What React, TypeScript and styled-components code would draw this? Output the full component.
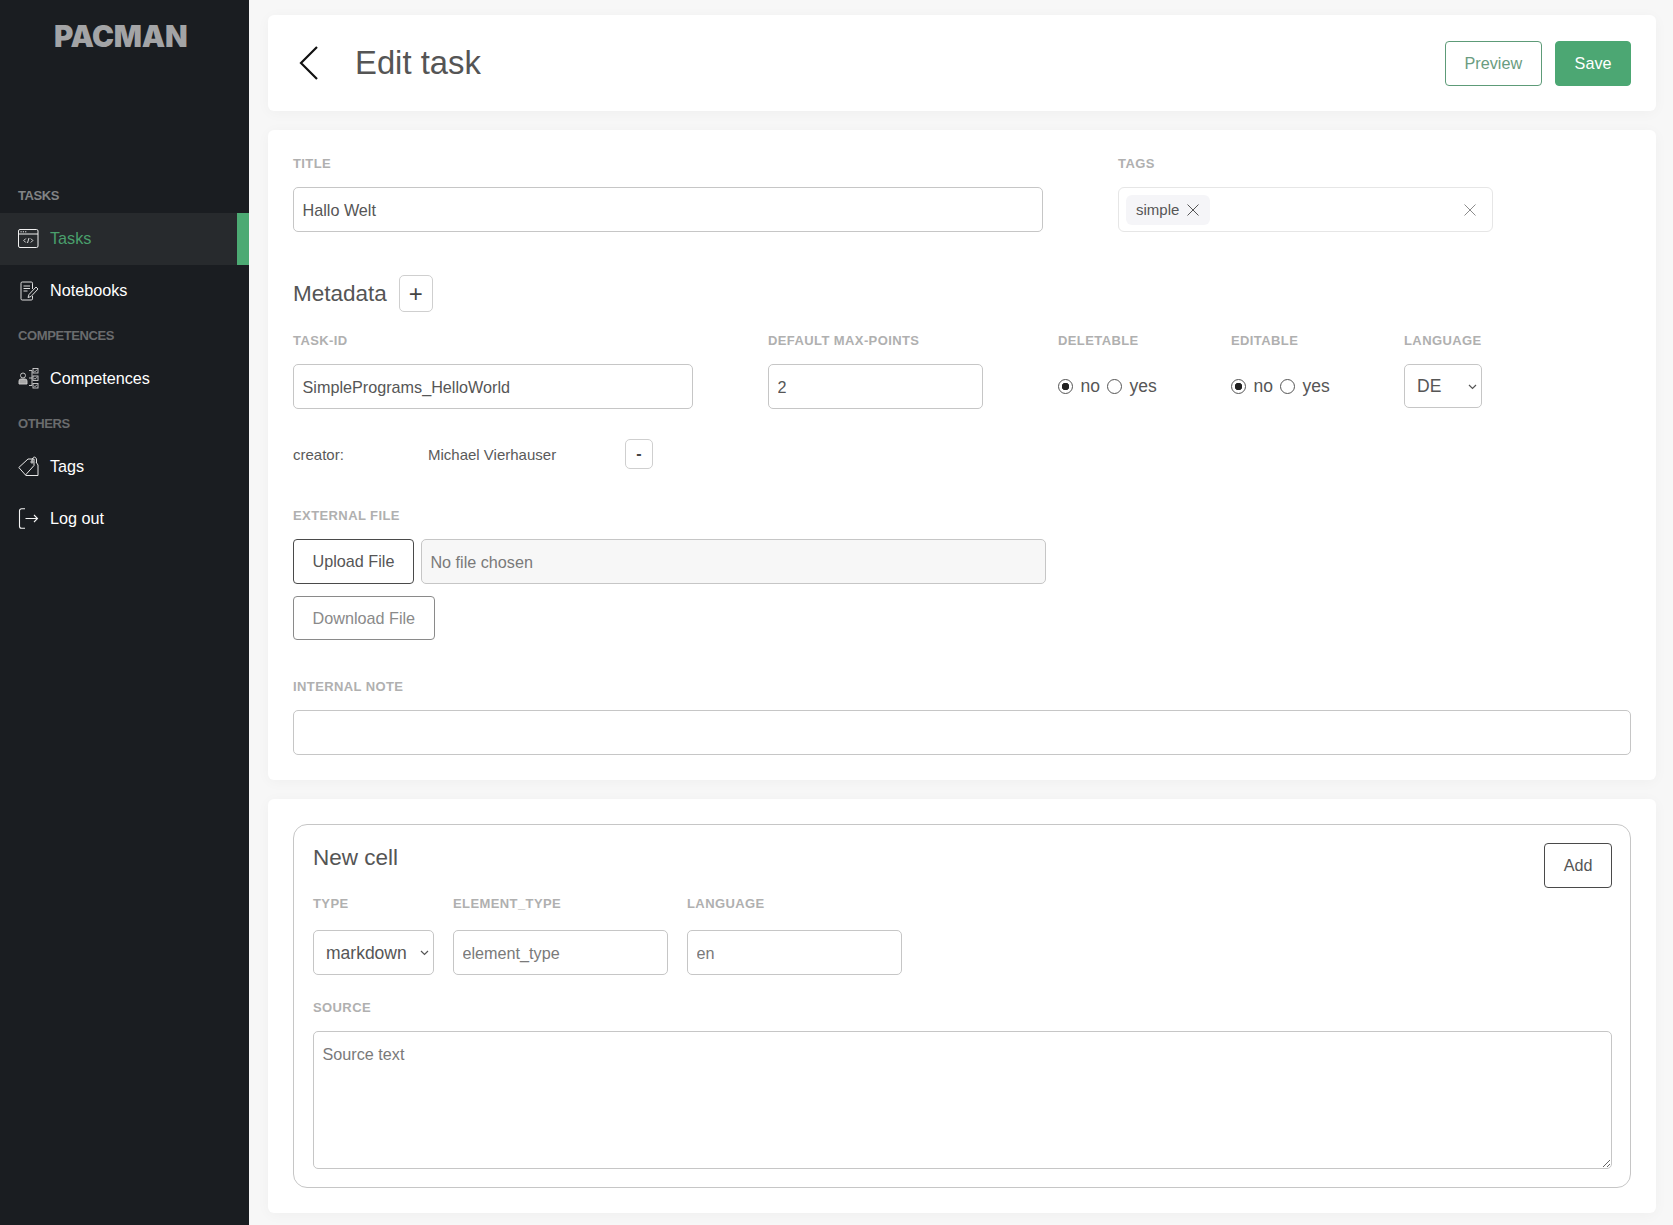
import React from "react";
import styled, { createGlobalStyle } from "styled-components";

const GlobalStyle = createGlobalStyle`
  * {
    box-sizing: border-box;
  }
  html,
  body {
    margin: 0;
    padding: 0;
    background: #f7f7f7;
  }
  body,
  input,
  select,
  textarea,
  button {
    font-family: "Liberation Sans", Arial, sans-serif;
  }
`;

const Page = styled.div`
  display: flex;
  min-height: 1225px;
  background: #f7f7f7;
`;

const Sidebar = styled.aside`
  flex: 0 0 249px;
  background: #1a1d21;
`;

const Logo = styled.div`
  height: 177px;
  padding-top: 18px;
  padding-left: 54px;
  font-family: Inter, "Liberation Sans", sans-serif;
  font-size: 29.5px;
  line-height: 36px;
  font-weight: 900;
  letter-spacing: -0.3px;
  color: #a3a4a6;
`;

const NavHeading = styled.div<{ $bright?: boolean }>`
  height: 36px;
  padding-left: 18px;
  padding-top: 11px;
  font-size: 13px;
  line-height: 16px;
  font-weight: 700;
  color: ${(p) => (p.$bright ? "#818385" : "#6a6c6e")};
  letter-spacing: -0.4px;
`;

const NavItem = styled.a<{ $active?: boolean }>`
  display: flex;
  align-items: center;
  gap: 11px;
  height: 52px;
  padding-left: 18px;
  padding-bottom: 2px;
  font-size: 16.2px;
  color: ${(p) => (p.$active ? "#4a9f6c" : "#ffffff")};
  background: ${(p) => (p.$active ? "#272a2d" : "transparent")};
  border-right: 12px solid ${(p) => (p.$active ? "#4caa73" : "transparent")};
`;

const Main = styled.main`
  flex: 1;
  padding: 15px 17px 10px 19px;
  display: flex;
  flex-direction: column;
  gap: 19px;
`;

const Card = styled.section`
  background: #ffffff;
  border-radius: 6px;
  padding: 25px;
  box-shadow: 0 2px 14px rgba(0, 0, 0, 0.035);
`;

const HeaderCard = styled(Card)`
  display: flex;
  align-items: center;
  height: 96px;
  padding: 0 25px 0 29px;
`;

const BackLink = styled.a`
  display: flex;
  width: 27px;
  margin-right: 31px;
  color: #111111;
`;

const PageTitle = styled.h1`
  flex: 1;
  margin: 0;
  font-size: 32.8px;
  font-weight: 400;
  color: #555555;
`;

const HeaderActions = styled.div`
  display: flex;
  gap: 13px;
`;

const Button = styled.button<{ $variant?: "green" | "solid" | "outline" | "muted" }>`
  height: ${(p) => (p.$variant === "muted" ? "44px" : "45px")};
  padding: ${(p) => (p.$variant === "muted" ? "1px" : "0")} ${(p) => (p.$variant === "green" ? "19px" : "18.5px")} 0;
  border-radius: 4px;
  font-size: 16.2px;
  background: ${(p) => (p.$variant === "solid" ? "#4ca773" : "#ffffff")};
  color: ${(p) =>
    p.$variant === "solid"
      ? "#ffffff"
      : p.$variant === "green"
        ? "#6a9c80"
        : p.$variant === "muted"
          ? "#8a8a8a"
          : "#565656"};
  border: 1px solid
    ${(p) =>
      p.$variant === "solid"
        ? "#4ca773"
        : p.$variant === "green"
          ? "#5d9b78"
          : p.$variant === "muted"
            ? "#8a8a8a"
            : "#4a4a4a"};
`;

const Row = styled.div<{ $gap?: number; $mt?: number }>`
  display: flex;
  align-items: flex-start;
  gap: ${(p) => p.$gap ?? 0}px;
  margin-top: ${(p) => p.$mt ?? 0}px;
`;

const Field = styled.div<{ $width: number }>`
  flex: 0 0 ${(p) => p.$width}px;
`;

const Label = styled.div<{ $tall?: boolean }>`
  height: ${(p) => (p.$tall ? "35px" : "32px")};
  padding-top: 1px;
  font-size: 13px;
  line-height: 15px;
  font-weight: 700;
  letter-spacing: 0.4px;
  color: #b0b0b0;
`;

const TextInput = styled.input<{ $width?: number }>`
  display: block;
  width: ${(p) => (p.$width ? `${p.$width}px` : "100%")};
  height: 45px;
  padding: 1px 8.5px 0;
  border: 1px solid #c6c6c6;
  border-radius: 5px;
  background: #ffffff;
  font-size: 16.2px;
  color: #565656;
  outline: none;
  &::placeholder {
    color: #7a7a7a;
  }
`;

const TagBox = styled.div`
  display: flex;
  align-items: center;
  height: 45px;
  padding: 0 15px 0 7px;
  border: 1px solid #e6e6e6;
  border-radius: 6px;
`;

const Tag = styled.span`
  display: flex;
  align-items: center;
  gap: 7px;
  height: 30px;
  padding: 0 10px;
  border-radius: 6px;
  background: #f5f5f8;
  font-size: 15px;
  color: #565656;
`;

const TagClear = styled.span`
  display: flex;
  margin-left: auto;
  color: #8c8c8c;
`;

const TagRemove = styled.span`
  display: flex;
  color: #555555;
`;

const SectionTitle = styled.h2`
  margin: 0;
  font-size: 22.5px;
  font-weight: 400;
  color: #555555;
`;

const MetadataHead = styled.div`
  display: flex;
  align-items: center;
  gap: 12px;
  margin-top: 43px;
  height: 37px;
`;

const SquareButton = styled.button<{ $small?: boolean }>`
  width: ${(p) => (p.$small ? "28px" : "34px")};
  height: ${(p) => (p.$small ? "30px" : "37px")};
  padding: 0;
  border: 1px solid #cfcfcf;
  border-radius: 5px;
  background: #ffffff;
  font-size: ${(p) => (p.$small ? "16px" : "24px")};
  font-weight: ${(p) => (p.$small ? 700 : 400)};
  color: #444444;
`;

const RadioRow = styled.div`
  display: flex;
  align-items: center;
  height: 45px;
  font-size: 17.5px;
  color: #565656;
`;

const Radio = styled.input.attrs({ type: "radio" })`
  appearance: none;
  width: 15px;
  height: 15px;
  margin: 0 7.5px 0 0;
  border: 1.2px solid #555555;
  border-radius: 50%;
  background: #ffffff;
  &:checked {
    background: radial-gradient(circle, #222222 0 3.5px, #ffffff 4px);
  }
`;

const RadioLabel = styled.label`
  margin-right: 7px;
`;

const SelectWrap = styled.div<{ $width: number }>`
  position: relative;
  width: ${(p) => p.$width}px;
`;

const Chevron = styled.svg`
  position: absolute;
  right: 5px;
  top: 20px;
  pointer-events: none;
`;

const SelectBox = styled.select<{ $height: number }>`
  display: block;
  width: 100%;
  height: ${(p) => p.$height}px;
  padding: 0 12px;
  appearance: none;
  border: 1px solid #c6c6c6;
  border-radius: 5px;
  background: #ffffff;
  font-size: 17.5px;
  color: #565656;
`;

const CreatorRow = styled.div`
  display: flex;
  align-items: center;
  height: 30px;
  margin-top: 30px;
  font-size: 15px;
  color: #5a5a5a;
`;

const CreatorKey = styled.span`
  width: 135px;
`;

const CreatorName = styled.span`
  width: 197px;
`;

const ExternalFile = styled.div`
  margin-top: 38px;
`;

const FileRow = styled.div`
  display: flex;
  gap: 7px;
  width: 753px;
`;

const FileName = styled(TextInput)`
  flex: 1;
  background: #f7f7f7;
`;

const DownloadRow = styled.div`
  margin-top: 12px;
`;

const NoteField = styled.div`
  margin-top: 38px;
`;

const CellBox = styled.div`
  height: 364px;
  padding: 18px 18px 19px 19px;
  border: 1px solid #c6c6c6;
  border-radius: 14px;
`;

const CellHead = styled.div`
  display: flex;
  justify-content: space-between;
  align-items: flex-start;
  height: 50px;
`;

const CellTitle = styled(SectionTitle)`
  margin-top: 2px;
`;

const TextArea = styled.textarea`
  display: block;
  width: 100%;
  height: 138px;
  padding: 13px 8.5px;
  border: 1px solid #c6c6c6;
  border-radius: 5px;
  font-size: 16.2px;
  color: #565656;
  outline: none;
  &::placeholder {
    color: #7a7a7a;
  }
`;

const SourceField = styled.div`
  margin-top: 24px;
`;

const XIcon = () => (
  <svg width="14" height="14" viewBox="0 0 14 14" fill="none" stroke="currentColor" strokeWidth="1">
    <path d="M1.5 1.5l11 11M12.5 1.5l-11 11" />
  </svg>
);

const TasksIcon = () => (
  <svg width="21" height="21" viewBox="0 0 21 21" fill="none" stroke="#f0f0f0" strokeWidth="1">
    <rect x="0.5" y="1.500" width="19.500" height="18" rx="1.500" />
    <path d="M0.500 6h19.500" />
    <path d="M2.500 3.800h1.200M4.800 3.800h1.200M7.100 3.800h1.200" />
    <path d="M7.800 10.500l-2 2 2 2M12.800 10.500l2 2-2 2M11 10l-1.500 5" strokeWidth="0.900" />
  </svg>
);

const NotebookIcon = () => (
  <svg width="21" height="21" viewBox="0 0 21 21" fill="none" stroke="#dddddd" strokeWidth="1">
    <path d="M14.500 9V3.200a1.200 1.200 0 0 0-1.200-1.200H4.200A1.200 1.200 0 0 0 3 3.200v15.600A1.200 1.200 0 0 0 4.200 20h9.100a1.200 1.200 0 0 0 1.200-1.200V16" />
    <path d="M5.500 6h6.500M5.500 8.500h6.500M5.500 11h4" />
    <path d="M10 17.500l1-3 7-7.500 2 2-7 7.500z" />
  </svg>
);

const CompetencesIcon = () => (
  <svg width="21" height="22" viewBox="0 0 21 22" fill="none" stroke="#d0d0d0" strokeWidth="0.900">
    <circle cx="5" cy="8.500" r="2.500" />
    <path d="M1 17v-3a2 2 0 0 1 2-2h4a2 2 0 0 1 2 2v3z" fill="#a8a8a8" />
    <path d="M11 3.500h3v15h-3M11 11h3" />
    <rect x="15" y="1.500" width="5" height="4.500" />
    <rect x="15" y="9" width="5" height="4.500" />
    <rect x="15" y="16.500" width="5" height="4.500" />
    <path d="M16 3.700l1 1 2-2M16 11.200l1 1 2-2M16 18.700l1 1 2-2" />
  </svg>
);

const TagsIcon = () => (
  <svg width="21" height="21" viewBox="0 0 21 21" fill="none" stroke="#e8e8e8" strokeWidth="1">
    <path d="M0.800 11.500L10 3h6v6.500L7.500 19z" />
    <path d="M7.500 19.500H20V9l-2-3" />
    <circle cx="14" cy="6" r="1.100" />
    <path d="M14 5c0-5 4.500-5 4.500-1v3" />
  </svg>
);

const LogoutIcon = () => (
  <svg width="21" height="21" viewBox="0 0 21 21" fill="none" stroke="#f4f4f4" strokeWidth="1.100">
    <path d="M7 0.800H3.500a2 2 0 0 0-2 2v15.400a2 2 0 0 0 2 2H7" />
    <path d="M7.500 10.500h12M16 7l3.500 3.500L16 14" />
  </svg>
);

const BackIcon = () => (
  <svg width="27" height="36" viewBox="0 0 27 36" fill="none" stroke="currentColor" strokeWidth="2.200">
    <path d="M20 2L4 18l16 16" />
  </svg>
);

const Select = ({ width, height, options }: { width: number; height: number; options: string[] }) => (
  <SelectWrap $width={width}>
    <SelectBox $height={height} defaultValue={options[0]}>
      {options.map((o) => (
        <option key={o}>{o}</option>
      ))}
    </SelectBox>
    <Chevron width="9" height="6" viewBox="0 0 9 6" fill="none" stroke="#555555" strokeWidth="1.200">
      <path d="M1 1l3.500 3.500L8 1" />
    </Chevron>
  </SelectWrap>
);

const YesNo = ({ name }: { name: string }) => (
  <RadioRow>
    <Radio name={name} defaultChecked />
    <RadioLabel>no</RadioLabel>
    <Radio name={name} />
    <RadioLabel>yes</RadioLabel>
  </RadioRow>
);

export default function App() {
  return (
    <Page>
      <GlobalStyle />
      <Sidebar>
        <Logo>PACMAN</Logo>
        <NavHeading $bright>TASKS</NavHeading>
        <NavItem $active>
          <TasksIcon />
          Tasks
        </NavItem>
        <NavItem>
          <NotebookIcon />
          Notebooks
        </NavItem>
        <NavHeading>COMPETENCES</NavHeading>
        <NavItem>
          <CompetencesIcon />
          Competences
        </NavItem>
        <NavHeading>OTHERS</NavHeading>
        <NavItem>
          <TagsIcon />
          Tags
        </NavItem>
        <NavItem>
          <LogoutIcon />
          Log out
        </NavItem>
      </Sidebar>
      <Main>
        <HeaderCard>
          <BackLink>
            <BackIcon />
          </BackLink>
          <PageTitle>Edit task</PageTitle>
          <HeaderActions>
            <Button $variant="green">Preview</Button>
            <Button $variant="solid">Save</Button>
          </HeaderActions>
        </HeaderCard>

        <Card>
          <Row $gap={75}>
            <Field $width={750}>
              <Label>TITLE</Label>
              <TextInput defaultValue="Hallo Welt" />
            </Field>
            <Field $width={375}>
              <Label>TAGS</Label>
              <TagBox>
                <Tag>
                  simple
                  <TagRemove>
                    <XIcon />
                  </TagRemove>
                </Tag>
                <TagClear>
                  <XIcon />
                </TagClear>
              </TagBox>
            </Field>
          </Row>

          <MetadataHead>
            <SectionTitle>Metadata</SectionTitle>
            <SquareButton>+</SquareButton>
          </MetadataHead>

          <Row $mt={20}>
            <Field $width={475}>
              <Label>TASK-ID</Label>
              <TextInput $width={400} defaultValue="SimplePrograms_HelloWorld" />
            </Field>
            <Field $width={290}>
              <Label>DEFAULT MAX-POINTS</Label>
              <TextInput $width={215} defaultValue="2" />
            </Field>
            <Field $width={173}>
              <Label>DELETABLE</Label>
              <YesNo name="deletable" />
            </Field>
            <Field $width={173}>
              <Label>EDITABLE</Label>
              <YesNo name="editable" />
            </Field>
            <Field $width={78}>
              <Label>LANGUAGE</Label>
              <Select width={78} height={44} options={["DE", "EN"]} />
            </Field>
          </Row>

          <CreatorRow>
            <CreatorKey>creator:</CreatorKey>
            <CreatorName>Michael Vierhauser</CreatorName>
            <SquareButton $small>-</SquareButton>
          </CreatorRow>

          <ExternalFile>
            <Label>EXTERNAL FILE</Label>
            <FileRow>
              <Button $variant="outline">Upload File</Button>
              <FileName placeholder="No file chosen" readOnly />
            </FileRow>
            <DownloadRow>
              <Button $variant="muted">Download File</Button>
            </DownloadRow>
          </ExternalFile>

          <NoteField>
            <Label>INTERNAL NOTE</Label>
            <TextInput />
          </NoteField>
        </Card>

        <Card>
          <CellBox>
            <CellHead>
              <CellTitle>New cell</CellTitle>
              <Button $variant="outline">Add</Button>
            </CellHead>
            <Row $gap={19} $mt={2}>
              <Field $width={121}>
                <Label $tall>TYPE</Label>
                <Select width={121} height={45} options={["markdown", "code"]} />
              </Field>
              <Field $width={215}>
                <Label $tall>ELEMENT_TYPE</Label>
                <TextInput placeholder="element_type" />
              </Field>
              <Field $width={215}>
                <Label $tall>LANGUAGE</Label>
                <TextInput placeholder="en" />
              </Field>
            </Row>
            <SourceField>
              <Label>SOURCE</Label>
              <TextArea placeholder="Source text" />
            </SourceField>
          </CellBox>
        </Card>
      </Main>
    </Page>
  );
}
